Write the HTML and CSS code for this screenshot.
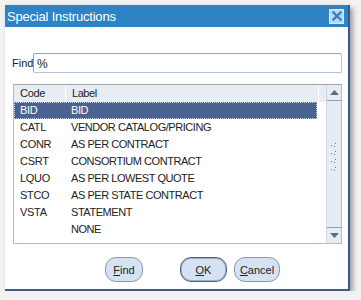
FILE: index.html
```html
<!DOCTYPE html>
<html lang="en">
<head>
    <meta charset="UTF-8">
    <title>Special Instructions</title>
    <link rel="stylesheet" href="styles.css">
</head>
<body>
    <div class="dialog">
        <div class="titlebar">
            <span class="title">Special Instructions</span>
            <span class="close">
                <svg width="12" height="12" viewBox="0 0 12 12">
                    <path d="M2.5 2.5 L9.5 9.5 M9.5 2.5 L2.5 9.5" stroke="#3b7fc0" stroke-width="2.4" stroke-linecap="square"/>
                </svg>
            </span>
        </div>
        <div class="content">
            <div class="find-row">
                <label class="find-label">Find</label>
                <div class="find-input">%</div>
            </div>

            <div class="list">
                <div class="table">
                    <div class="head">
                        <div class="col-code">Code</div>
                        <div class="col-label">Label</div>
                        <div class="col-fill"></div>
                    </div>
                    <div class="rows">
                        <div class="row selected"><div class="col-code">BID</div><div class="col-label">BID</div></div>
                        <div class="row"><div class="col-code">CATL</div><div class="col-label">VENDOR CATALOG/PRICING</div></div>
                        <div class="row"><div class="col-code">CONR</div><div class="col-label">AS PER CONTRACT</div></div>
                        <div class="row"><div class="col-code">CSRT</div><div class="col-label">CONSORTIUM CONTRACT</div></div>
                        <div class="row"><div class="col-code">LQUO</div><div class="col-label">AS PER LOWEST QUOTE</div></div>
                        <div class="row"><div class="col-code">STCO</div><div class="col-label">AS PER STATE CONTRACT</div></div>
                        <div class="row"><div class="col-code">VSTA</div><div class="col-label">STATEMENT</div></div>
                        <div class="row"><div class="col-code"></div><div class="col-label">NONE</div></div>
                    </div>
                </div>
                <div class="scrollbar">
                    <div class="scroll-btn up">
                        <svg width="9" height="5" viewBox="0 0 9 5"><path d="M4.5 0 L9 5 L0 5 Z" fill="#5b6b85"/></svg>
                    </div>
                    <div class="scroll-track">
                        <svg width="8" height="34" viewBox="0 0 8 34">
                            <g fill="#6f7f99">
                                <rect x="5" y="1" width="1" height="1"/><rect x="1" y="3" width="1" height="1"/><rect x="4" y="4" width="1" height="1"/>
                                <rect x="5" y="9" width="1" height="1"/><rect x="1" y="11" width="1" height="1"/><rect x="4" y="12" width="1" height="1"/>
                                <rect x="5" y="17" width="1" height="1"/><rect x="1" y="19" width="1" height="1"/><rect x="4" y="20" width="1" height="1"/>
                                <rect x="5" y="25" width="1" height="1"/><rect x="1" y="27" width="1" height="1"/><rect x="4" y="28" width="1" height="1"/>
                            </g>
                        </svg>
                    </div>
                    <div class="scroll-btn down">
                        <svg width="9" height="5" viewBox="0 0 9 5"><path d="M0 0 L9 0 L4.5 5 Z" fill="#5b6b85"/></svg>
                    </div>
                </div>
            </div>

            <div class="buttons">
                <button class="btn btn-find"><u>F</u>ind</button>
                <button class="btn btn-ok"><u>O</u>K</button>
                <button class="btn btn-cancel"><u>C</u>ancel</button>
            </div>
        </div>
    </div>
</body>
</html>
```

FILE: styles.css
```css
body{
    margin: 0px;
    background-color: #f2f2f2;
    font-family: "Liberation Sans", Arial, sans-serif;
    font-size: 11px;
    color: #222;
}
.dialog{
    margin: 5px 0 0 5px;
    width: 345px;
    height: 286px;
    box-sizing: border-box;
    background-color: #fff;
    border-right: 2px solid #3c5a8a;
    border-bottom: 2px solid #3c5a8a;
    box-shadow: 3px 3px 5px rgba(0, 0, 0, 0.35);
    display: flex;
    flex-direction: column;
}
.titlebar{
    height: 22px;
    background-color: #2e83c4;
    display: flex;
    align-items: center;
    justify-content: space-between;
    padding: 0 4px 0 2px;
}
.title{
    color: #fff;
    font-size: 13px;
    letter-spacing: -0.2px;
}
.close{
    width: 13px;
    height: 13px;
    background-color: #b9d8f2;
    border: 1px solid #d8e9f8;
    display: flex;
    align-items: center;
    justify-content: center;
}
.content{
    padding: 26px 6px 0 7px;
}
.find-row{
    display: flex;
    align-items: center;
    height: 20px;
}
.find-label{
    width: 21px;
    font-size: 11px;
}
.find-input{
    flex: 1;
    height: 20px;
    box-sizing: border-box;
    border: 1px solid #b5c3d6;
    border-top-color: #9aa3ad;
    border-left-color: #9aa3ad;
    border-radius: 2px;
    padding: 3px 3px;
    font-size: 12px;
}
.list{
    margin: 11px 0 0 1px;
    height: 160px;
    box-sizing: border-box;
    border: 1px solid #b3bdc9;
    border-top-color: #9ba5b0;
    display: flex;
}
.table{
    flex: 1;
    display: flex;
    flex-direction: column;
}
.head{
    display: flex;
    height: 17px;
    background-color: #e8edf4;
    line-height: 17px;
}
.head .col-code{
    border-right: 1px solid #fff;
}
.head .col-fill{
    flex: 1;
    border-left: 1px solid #fff;
    margin-left: auto;
    max-width: 9px;
}
.col-code{
    width: 45px;
    padding-left: 6px;
    letter-spacing: -0.3px;
}
.col-label{
    width: 246px;
    padding-left: 6px;
    letter-spacing: -0.45px;
}
.rows{
    flex: 1;
    padding-right: 9px;
}
.row{
    display: flex;
    height: 17px;
    line-height: 17px;
}
.row.selected{
    background-color: #4a6390;
    color: #fff;
    outline: 1px dotted #c9d2e0;
    outline-offset: -1px;
}
.scrollbar{
    width: 14px;
    background-color: #e6ecf4;
    border-left: 1px solid #cdd6e2;
    display: flex;
    flex-direction: column;
}
.scroll-btn{
    height: 15px;
    display: flex;
    align-items: center;
    justify-content: center;
    background-color: #e6ecf4;
}
.scroll-btn.up{
    border-bottom: 1px solid #8e9cb2;
    border-radius: 5px 5px 0 0;
}
.scroll-btn.down{
    border-top: 1px solid #8e9cb2;
    border-radius: 0 0 5px 5px;
}
.scroll-track{
    flex: 1;
    display: flex;
    justify-content: center;
    padding-top: 41px;
}
.buttons{
    display: flex;
    margin-top: 13px;
    padding-left: 93px;
}
.btn{
    height: 25px;
    box-sizing: border-box;
    background-color: #d4e2f3;
    border: 1px solid #8b98a8;
    border-radius: 11px;
    font-family: "Liberation Sans", Arial, sans-serif;
    font-size: 11px;
    color: #222;
    padding: 0;
    cursor: pointer;
}
.btn-find{
    width: 38px;
}
.btn-ok{
    width: 47px;
    margin-left: 37px;
    border: 1px solid #4c5f7e;
    box-shadow: inset 0 0 0 1px #9fb0c6;
}
.btn-cancel{
    width: 46px;
    margin-left: 7px;
}
```
